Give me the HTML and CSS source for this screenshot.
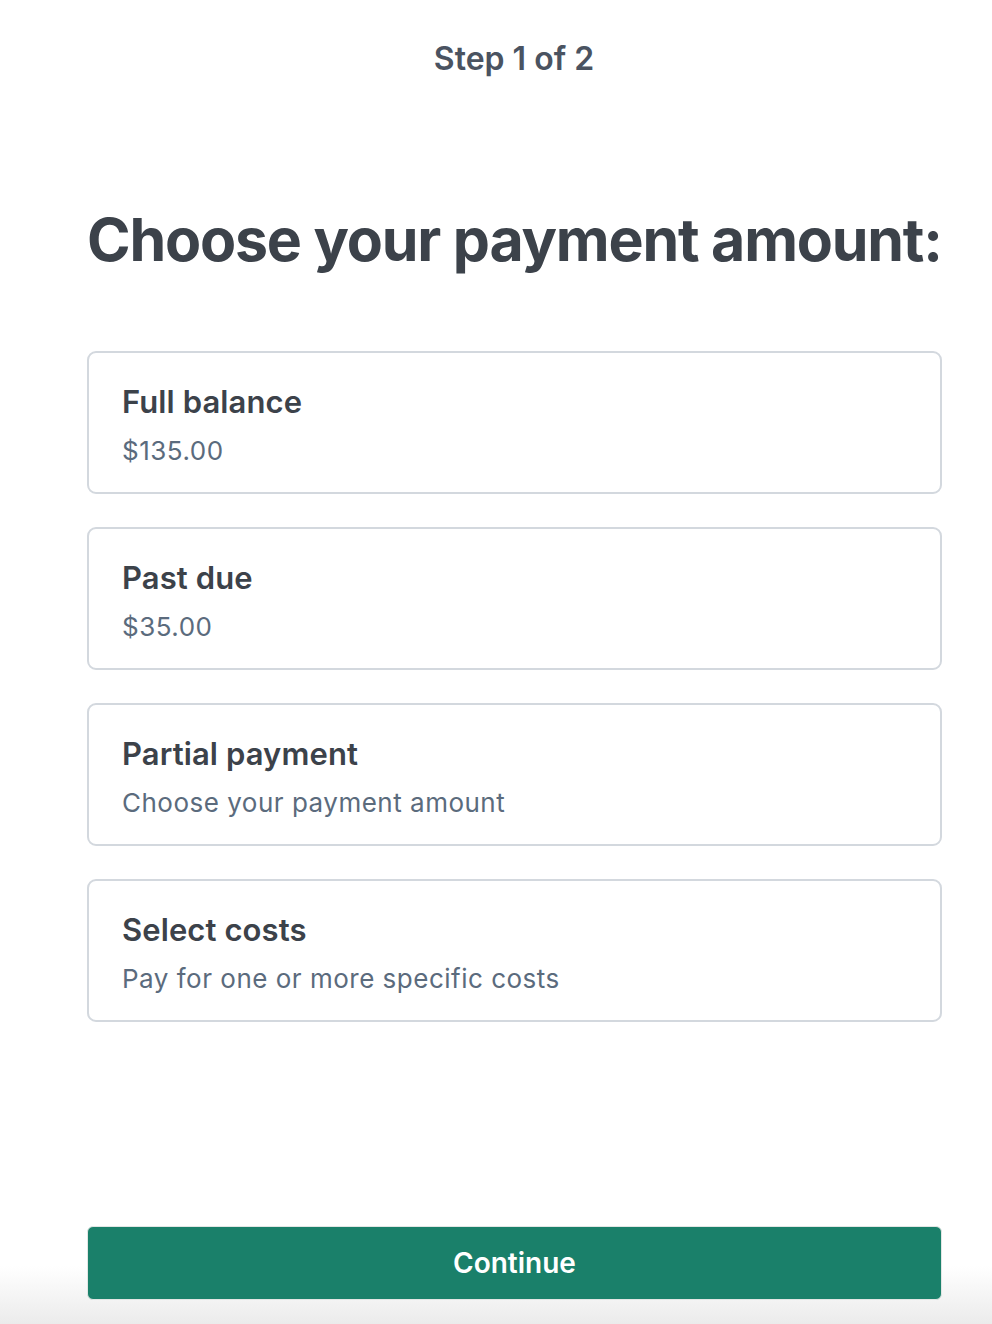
FILE: index.html
```html
<!DOCTYPE html>
<html lang="en">
<head>
<meta charset="utf-8">
<title>Choose your payment amount</title>
<link rel="stylesheet" href="styles.css">
</head>
<body>
<div class="page">
  <header class="step">Step 1 of 2</header>
  <h1 class="title">Choose your payment amount:</h1>
  <div class="options">
    <div class="option">
      <div class="option-title">Full balance</div>
      <div class="option-sub">$135.00</div>
    </div>
    <div class="option">
      <div class="option-title">Past due</div>
      <div class="option-sub">$35.00</div>
    </div>
    <div class="option">
      <div class="option-title">Partial payment</div>
      <div class="option-sub">Choose your payment amount</div>
    </div>
    <div class="option">
      <div class="option-title">Select costs</div>
      <div class="option-sub">Pay for one or more specific costs</div>
    </div>
  </div>
  <div class="spacer"></div>
  <footer class="footer">
    <button class="continue">Continue</button>
  </footer>
</div>
</body>
</html>
```
FILE: styles.css
```css
html, body {
  margin: 0;
  padding: 0;
  background: #ffffff;
}
body {
  font-family: Inter, "Noto Sans", "Liberation Sans", sans-serif;
  -webkit-font-smoothing: antialiased;
}
.page {
  width: 992px;
  height: 1324px;
  display: flex;
  flex-direction: column;
  box-sizing: border-box;
}
.step {
  margin-top: 39px;
  text-align: center;
  font-size: 32px;
  font-weight: 600;
  color: #4a5361;
  line-height: 40px;
  padding-left: 36px;
}
.title {
  margin: 123px 0 0 87px;
  font-size: 59px;
  font-weight: 700;
  color: #3c424a;
  line-height: 76px;
  letter-spacing: -1.2px;
}
.options {
  margin: 73px 0 0 87px;
  width: 855px;
  display: flex;
  flex-direction: column;
  gap: 33px;
}
.option {
  box-sizing: border-box;
  height: 143px;
  border: 2px solid #d3d8de;
  border-radius: 9px;
  padding: 29px 0 0 33px;
}
.option-title {
  font-size: 31px;
  font-weight: 600;
  color: #3c424a;
  line-height: 40px;
  letter-spacing: 0.1px;
}
.option-sub {
  margin-top: 13px;
  font-size: 26px;
  font-weight: 400;
  color: #5b6b7d;
  line-height: 32px;
  letter-spacing: 0.5px;
}
.spacer {
  flex: 1;
}
.footer {
  height: 98px;
  background: linear-gradient(to bottom, #ffffff 0px, #ffffff 40px, #ebebeb 98px);
  padding: 0 0 0 87px;
}
.continue {
  display: block;
  width: 855px;
  height: 74px;
  border: 1px solid #e2e6e4;
  border-radius: 6px;
  background: #1a806a;
  color: #ffffff;
  font-family: Inter, "Noto Sans", "Liberation Sans", sans-serif;
  font-size: 28px;
  font-weight: 600;
  margin-top: 0;
  cursor: pointer;
}
```
